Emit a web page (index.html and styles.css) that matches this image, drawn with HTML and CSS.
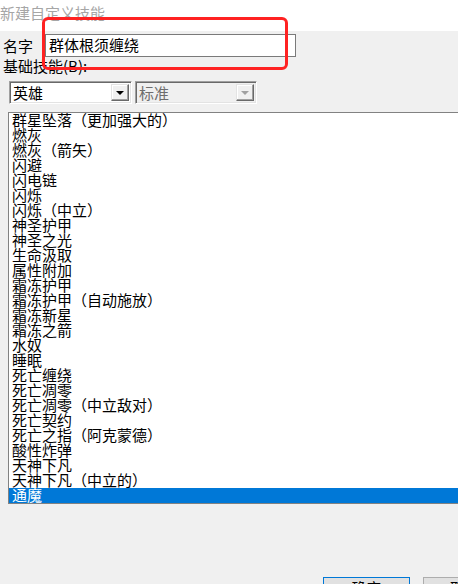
FILE: index.html
```html
<!DOCTYPE html>
<html>
<head>
<meta charset="utf-8">
<link rel="stylesheet" href="styles.css">
</head>
<body>
<div class="title">新建自定义技能</div>
<div class="dialog">
  <div class="name-row">
    <span class="lbl">名字</span>
    <div class="input">群体根须缠绕</div>
  </div>
  <div class="mark"></div>
  <div class="lbl2">基础技能(<u>B</u>):</div>
  <div class="combos">
    <div class="combo c1"><span class="val">英雄</span><span class="btn"><i class="arr"></i></span></div>
    <div class="combo c2 dis"><span class="val">标准</span><span class="btn"><i class="arr"></i></span></div>
  </div>
  <div class="list">
    <div class="it">群星坠落（更加强大的）</div>
    <div class="it">燃灰</div>
    <div class="it">燃灰（箭矢）</div>
    <div class="it">闪避</div>
    <div class="it">闪电链</div>
    <div class="it">闪烁</div>
    <div class="it">闪烁（中立）</div>
    <div class="it">神圣护甲</div>
    <div class="it">神圣之光</div>
    <div class="it">生命汲取</div>
    <div class="it">属性附加</div>
    <div class="it">霜冻护甲</div>
    <div class="it">霜冻护甲（自动施放）</div>
    <div class="it">霜冻新星</div>
    <div class="it">霜冻之箭</div>
    <div class="it">水奴</div>
    <div class="it">睡眠</div>
    <div class="it">死亡缠绕</div>
    <div class="it">死亡凋零</div>
    <div class="it">死亡凋零（中立敌对）</div>
    <div class="it">死亡契约</div>
    <div class="it">死亡之指（阿克蒙德）</div>
    <div class="it">酸性炸弹</div>
    <div class="it">天神下凡</div>
    <div class="it">天神下凡（中立的）</div>
    <div class="it sel">通魔</div>
  </div>
  <div class="buttons">
    <div class="pb ok">确定</div>
    <div class="pb last">取消</div>
  </div>
</div>
</body>
</html>
```
FILE: styles.css
```css
html, body { margin: 0; padding: 0; }
body {
  width: 458px; height: 584px; overflow: hidden;
  font-family: "Noto Sans CJK SC", "Liberation Sans", sans-serif;
  font-size: 15px; color: #000; background: #f0f0f0;
}
.title {
  height: 31px; background: #fff; color: #a6a6a6;
  line-height: 26px; padding-left: 0; white-space: nowrap;
}
.dialog { position: relative; height: 553px; }
.name-row { display: flex; align-items: center; padding-top: 3px; height: 23px; }
.lbl { width: 45px; padding-left: 3px; box-sizing: border-box; line-height: 23px; }
.input {
  width: 251px; height: 23px; box-sizing: border-box;
  border: 1px solid #7a7a7a; background: #fff;
  padding-left: 3px; line-height: 20px; white-space: nowrap;
}
.mark {
  position: absolute; left: 42px; top: -14px; width: 246px; height: 53px;
  box-sizing: border-box; border: 3px solid #f22; border-radius: 6px;
}
.lbl2 { padding-left: 3px; height: 17px; line-height: 16px; margin-top: 1px; }
.lbl2 u { text-decoration: none; }
.combos { display: flex; gap: 3px; margin-top: 6px; padding-left: 9px; height: 23px; }
.combo {
  display: flex; height: 23px; box-sizing: border-box; background: #fff;
  border: 1px solid #a0a0a0; border-right-color: #fff; border-bottom-color: #fff;
  box-shadow: inset 1px 1px 0 #696969, inset -1px -1px 0 #e3e3e3;
  padding: 2px;
}
.c1 { width: 123px; }
.c2 { width: 122px; }
.val { flex: 1; line-height: 18px; padding-left: 1px; white-space: nowrap; }
.dis { background: #f0f0f0; }
.dis .val { color: #6d6d6d; }
.btn {
  width: 18px; height: 17px; box-sizing: border-box; background: #f0f0f0;
  border: 1px solid #e3e3e3; border-right-color: #696969; border-bottom-color: #696969;
  box-shadow: inset -1px -1px 0 #a0a0a0, inset 1px 1px 0 #fff;
  display: flex; align-items: center; justify-content: center;
}
.arr {
  width: 0; height: 0; border-left: 4px solid transparent; border-right: 4px solid transparent;
  border-top: 4px solid #000; margin-top: 1px;
}
.dis .arr { border-top-color: #a0a0a0; }
.list {
  margin-top: 8px; margin-left: 8px; width: 450px; height: 392px; box-sizing: border-box;
  background: #fff; border: 1px solid #828282; border-right: none; padding-left: 3px; overflow: hidden;
}
.it { height: 15px; line-height: 14px; white-space: nowrap; }
.sel { background: #0078d7; color: #fff; margin-left: -3px; padding-left: 3px; }
.buttons { display: flex; gap: 13px; padding-left: 323px; margin-top: 73px; }
.pb {
  width: 87px; height: 23px; flex: none; box-sizing: border-box;
  border: 1px solid #adadad; background: #e1e1e1; text-align: center; line-height: 20px;
}
.ok { border-color: #0078d7; }
.last { width: 35px; border-right: none; text-align: left; padding-left: 26px; overflow: hidden; }
```
